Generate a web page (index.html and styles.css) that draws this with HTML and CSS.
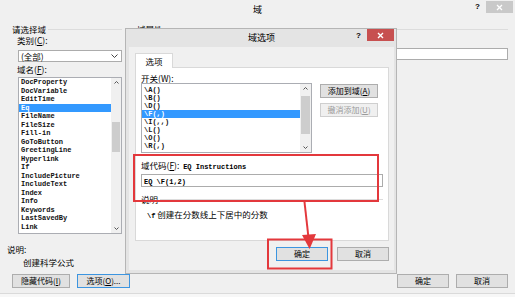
FILE: index.html
```html
<!DOCTYPE html>
<html lang="zh-CN">
<head>
    <meta charset="UTF-8" />
    <title>域</title>
    <link rel="stylesheet" href="styles.css">
</head>
<body>

<div class="window">

    <!-- Barre de titre principale -->
    <div class="titlebar">
        <span></span>
        <span class="title">域</span>
        <div class="title-buttons">
            <span class="help">?</span>
            <span class="close-btn grey">
                <svg width="7" height="7" viewBox="0 0 7 7"><path d="M1 1L6 6M6 1L1 6" stroke="#fff" stroke-width="1.3"/></svg>
            </span>
        </div>
    </div>

    <div class="main">
        <!-- Colonne gauche : choix du champ -->
        <div class="left-col">
            <div class="group-title left-group"><span>请选择域</span></div>
            <div class="lbl">类别(<u>C</u>):</div>
            <div class="select">
                <span>(全部)</span>
                <svg width="7" height="4" viewBox="0 0 7 4"><path d="M0.5 0.5L3.5 3.5L6.5 0.5" fill="none" stroke="#444" stroke-width="1"/></svg>
            </div>
            <div class="lbl">域名(<u>F</u>):</div>
            <div class="listbox fields">
                <div class="items">
                    <div class="item">DocProperty</div>
                    <div class="item">DocVariable</div>
                    <div class="item">EditTime</div>
                    <div class="item selected">Eq</div>
                    <div class="item">FileName</div>
                    <div class="item">FileSize</div>
                    <div class="item">Fill-in</div>
                    <div class="item">GoToButton</div>
                    <div class="item">GreetingLine</div>
                    <div class="item">Hyperlink</div>
                    <div class="item">If</div>
                    <div class="item">IncludePicture</div>
                    <div class="item">IncludeText</div>
                    <div class="item">Index</div>
                    <div class="item">Info</div>
                    <div class="item">Keywords</div>
                    <div class="item">LastSavedBy</div>
                    <div class="item">Link</div>
                </div>
                <div class="scrollbar">
                    <div class="arrow">
                        <svg width="5" height="3" viewBox="0 0 5 3"><path d="M0.5 2.5L2.5 0.5L4.5 2.5" fill="none" stroke="#555" stroke-width="1"/></svg>
                    </div>
                    <div class="track"><div class="thumb fields-thumb"></div></div>
                    <div class="arrow">
                        <svg width="5" height="3" viewBox="0 0 5 3"><path d="M0.5 0.5L2.5 2.5L4.5 0.5" fill="none" stroke="#555" stroke-width="1"/></svg>
                    </div>
                </div>
            </div>
            <div class="desc-title">说明:</div>
            <div class="desc-text">创建科学公式</div>
        </div>

        <!-- Colonne droite : propriétés -->
        <div class="right-col">
            <div class="group-title"><span>域属性</span></div>
            <div class="text-input wide"></div>
        </div>
    </div>

    <!-- Boutons du bas -->
    <div class="footer">
        <div class="btn btn-wide">隐藏代码(<u>I</u>)</div>
        <div class="btn btn-focus">选项(<u>O</u>)...</div>
        <span class="spacer"></span>
        <div class="btn">确定</div>
        <div class="btn">取消</div>
    </div>

    <!-- Boite de dialogue "域选项" par-dessus -->
    <div class="dialog">
        <div class="titlebar dialog-titlebar">
            <span></span>
            <span class="title">域选项</span>
            <div class="title-buttons">
                <span class="help">?</span>
                <span class="close-btn red">
                    <svg width="7" height="7" viewBox="0 0 7 7"><path d="M1 1L6 6M6 1L1 6" stroke="#fff" stroke-width="1.4"/></svg>
                </span>
            </div>
        </div>
        <div class="dialog-body">
            <div class="tabs"><div class="tab">选项</div></div>
            <div class="pane">
                <div class="lbl pane-lbl">开关(<u>W</u>):</div>
                <div class="switch-row">
                    <div class="listbox switches">
                        <div class="items">
                            <div class="item">\A()</div>
                            <div class="item">\B()</div>
                            <div class="item">\D()</div>
                            <div class="item selected">\F(,)</div>
                            <div class="item">\I(,,)</div>
                            <div class="item">\L()</div>
                            <div class="item">\O()</div>
                            <div class="item">\R(,)</div>
                        </div>
                        <div class="scrollbar">
                            <div class="arrow">
                                <svg width="5" height="3" viewBox="0 0 5 3"><path d="M0.5 2.5L2.5 0.5L4.5 2.5" fill="none" stroke="#555" stroke-width="1"/></svg>
                            </div>
                            <div class="track"><div class="thumb switches-thumb"></div></div>
                            <div class="arrow">
                                <svg width="5" height="3" viewBox="0 0 5 3"><path d="M0.5 0.5L2.5 2.5L4.5 0.5" fill="none" stroke="#555" stroke-width="1"/></svg>
                            </div>
                        </div>
                    </div>
                    <div class="side-buttons">
                        <div class="btn">添加到域(<u>A</u>)</div>
                        <div class="btn disabled">撤消添加(<u>U</u>)</div>
                    </div>
                </div>
                <div class="code-line">域代码(<u>F</u>):&nbsp; <span class="mono">EQ Instructions</span></div>
                <div class="text-input code-input"><span class="mono">EQ \F(1,2)</span></div>
                <div class="group-title pane-group"><span>说明</span></div>
                <div class="switch-desc"><span class="mono">\f</span> 创建在分数线上下居中的分数</div>
            </div>
            <div class="dialog-buttons">
                <div class="btn btn-default">确定</div>
                <div class="btn">取消</div>
            </div>
        </div>
    </div>

    <!-- Annotations rouges -->
    <svg class="annotations" width="515" height="297" viewBox="0 0 515 297">
        <rect x="134" y="155" width="244" height="46" fill="none" stroke="#e3383c" stroke-width="2"/>
        <rect x="268" y="239.5" width="63.5" height="29" fill="none" stroke="#e3383c" stroke-width="2"/>
        <path d="M304.5 202L308.3 236" stroke="#e3383c" stroke-width="2"/>
        <polygon points="302,235 316,234 309.6,249" fill="#e3383c"/>
    </svg>
</div>

</body>
</html>
```

FILE: styles.css
```css
/* ------------------------
   GLOBAL
------------------------- */
body {
    margin: 0;
    background: #f7f7f7;
    font-family: "Noto Sans CJK SC", "Liberation Sans", sans-serif;
    font-size: 8.5px;
    color: #000;
}

u {
    text-decoration: underline;
}

.mono {
    font-family: "Liberation Mono", "Noto Sans CJK SC", monospace;
    font-size: 7px;
    font-weight: bold;
}

.window {
    position: relative;
    width: 515px;
    height: 293px;
    background: #f0f0f0;
    border-bottom: 1px solid #dadada;
    display: flex;
    flex-direction: column;
    overflow: hidden;
}

/* Barre de titre */
.titlebar {
    height: 22px;
    display: grid;
    grid-template-columns: 1fr auto 1fr;
    align-items: start;
    flex-shrink: 0;
}

.titlebar .title {
    font-size: 9px;
    line-height: 20px;
}

.title-buttons {
    display: flex;
    justify-content: flex-end;
    align-items: flex-start;
}

.help {
    font-family: "Liberation Sans", sans-serif;
    font-weight: bold;
    font-size: 8px;
    line-height: 14px;
    margin-right: 6px;
}

.close-btn {
    width: 27px;
    height: 12px;
    display: flex;
    align-items: center;
    justify-content: center;
}

.close-btn.grey {
    background: #c9c9c9;
    margin-top: 1px;
    margin-right: 2px;
}

.close-btn.red {
    background: #c75050;
}

/* Partie centrale */
.main {
    display: flex;
    height: 252px;
    flex-shrink: 0;
}

.left-col {
    width: 125px;
    display: flex;
    flex-direction: column;
}

.right-col {
    flex: 1;
    padding-left: 12px;
    padding-right: 7px;
    display: flex;
    flex-direction: column;
}

.group-title {
    display: flex;
    align-items: center;
    gap: 2px;
    line-height: 12px;
    margin-top: 1px;
}

.group-title::after {
    content: "";
    flex: 1;
    border-top: 1px solid #dcdcdc;
}

.left-group {
    margin-left: 12px;
    margin-right: 3px;
}

.lbl {
    line-height: 11px;
    margin-left: 17px;
}

.select {
    margin: 4px 3px 2px 18px;
    height: 10px;
    border: 1px solid #acacac;
    background: #fff;
    display: flex;
    align-items: center;
    justify-content: space-between;
    padding: 0 3px 0 2px;
    line-height: 10px;
}

/* Listes */
.listbox {
    display: flex;
    background: #fff;
    border: 1px solid #abadb3;
}

.items {
    flex: 1;
    display: flex;
    flex-direction: column;
}

.item {
    font-family: "Liberation Mono", monospace;
    font-size: 7px;
    font-weight: bold;
    white-space: nowrap;
    padding-left: 2px;
    color: #111;
}

.item.selected {
    background: #3399ff;
    color: #fff;
}

.fields {
    margin: 2px 3px 0 18px;
    height: 155px;
}

.fields .item {
    line-height: 8.5px;
}

.switches {
    width: 169px;
    height: 68px;
}

.switches .items {
    padding-top: 2px;
}

.switches .item {
    line-height: 8px;
}

.scrollbar {
    width: 10px;
    display: flex;
    flex-direction: column;
    background: #f0f0f0;
}

.switches .scrollbar {
    width: 11px;
}

.arrow {
    height: 9px;
    display: flex;
    align-items: center;
    justify-content: center;
}

.track {
    flex: 1;
}

.thumb {
    background: #cdcdcd;
    margin: 0 1px;
}

.fields-thumb {
    margin-top: 35px;
    height: 30px;
}

.switches-thumb {
    margin-top: 3px;
    height: 38px;
}

.desc-title {
    margin: 9px 0 0 7px;
    line-height: 12px;
}

.desc-text {
    margin-left: 23px;
    line-height: 14px;
}

.text-input {
    background: #fff;
    border: 1px solid #acacac;
    height: 10px;
}

.text-input.wide {
    margin-top: 13px;
}

/* Boutons */
.btn {
    height: 12px;
    border: 1px solid #adadad;
    background: #e1e1e1;
    display: flex;
    align-items: center;
    justify-content: center;
    font-size: 8px;
    line-height: 12px;
    white-space: nowrap;
}

.btn.disabled {
    background: #f0f0f0;
    border-color: #cfcfcf;
    color: #9a9a9a;
}

.btn-focus,
.btn-default {
    border-color: #3c95e0;
}

.footer {
    display: flex;
    gap: 7px;
    padding: 0 7px 0 12px;
}

.footer .btn {
    width: 50px;
}

.footer .btn-wide {
    width: 56px;
}

.footer .btn-focus {
    width: 51px;
}

.spacer {
    flex: 1;
}

/* Boite de dialogue superposée */
.dialog {
    position: absolute;
    left: 125px;
    top: 28px;
    width: 265px;
    height: 241px;
    background: #e4e4e4;
    border: 1px solid #b5b5b5;
    display: flex;
    flex-direction: column;
    padding: 0 2px 3px 3px;
}

.dialog-titlebar {
    height: 18px;
}

.dialog-titlebar .title {
    line-height: 18px;
}

.dialog-body {
    flex: 1;
    background: #f0f0f0;
    padding: 6px 5px 0 6px;
    display: flex;
    flex-direction: column;
}

.tabs {
    display: flex;
}

.tab {
    width: 36px;
    height: 14px;
    background: #fff;
    border: 1px solid #d9d9d9;
    border-bottom: none;
    line-height: 14px;
    text-align: center;
    margin-bottom: -1px;
    position: relative;
}

.pane {
    height: 167px;
    background: #fff;
    border: 1px solid #d9d9d9;
    padding: 5px 5px 0 5px;
}

.pane-lbl {
    margin-left: 0;
    line-height: 10px;
}

.switch-row {
    display: flex;
    gap: 8px;
    align-items: flex-start;
}

.side-buttons {
    display: flex;
    flex-direction: column;
    gap: 5px;
    padding-top: 1px;
}

.side-buttons .btn {
    width: 56px;
}

.code-line {
    margin-top: 7px;
    line-height: 11px;
}

.code-input {
    margin-top: 1px;
    height: 11px;
    line-height: 11px;
    padding-left: 2px;
}

.pane-group {
    margin-top: 6px;
}

.switch-desc {
    margin-top: 3px;
    padding-left: 6px;
    line-height: 12px;
}

.dialog-buttons {
    display: flex;
    justify-content: flex-end;
    gap: 9px;
    margin-top: 6px;
}

.dialog-buttons .btn {
    width: 50px;
}

/* Annotations */
.annotations {
    position: absolute;
    left: 0;
    top: 0;
    pointer-events: none;
}
```
